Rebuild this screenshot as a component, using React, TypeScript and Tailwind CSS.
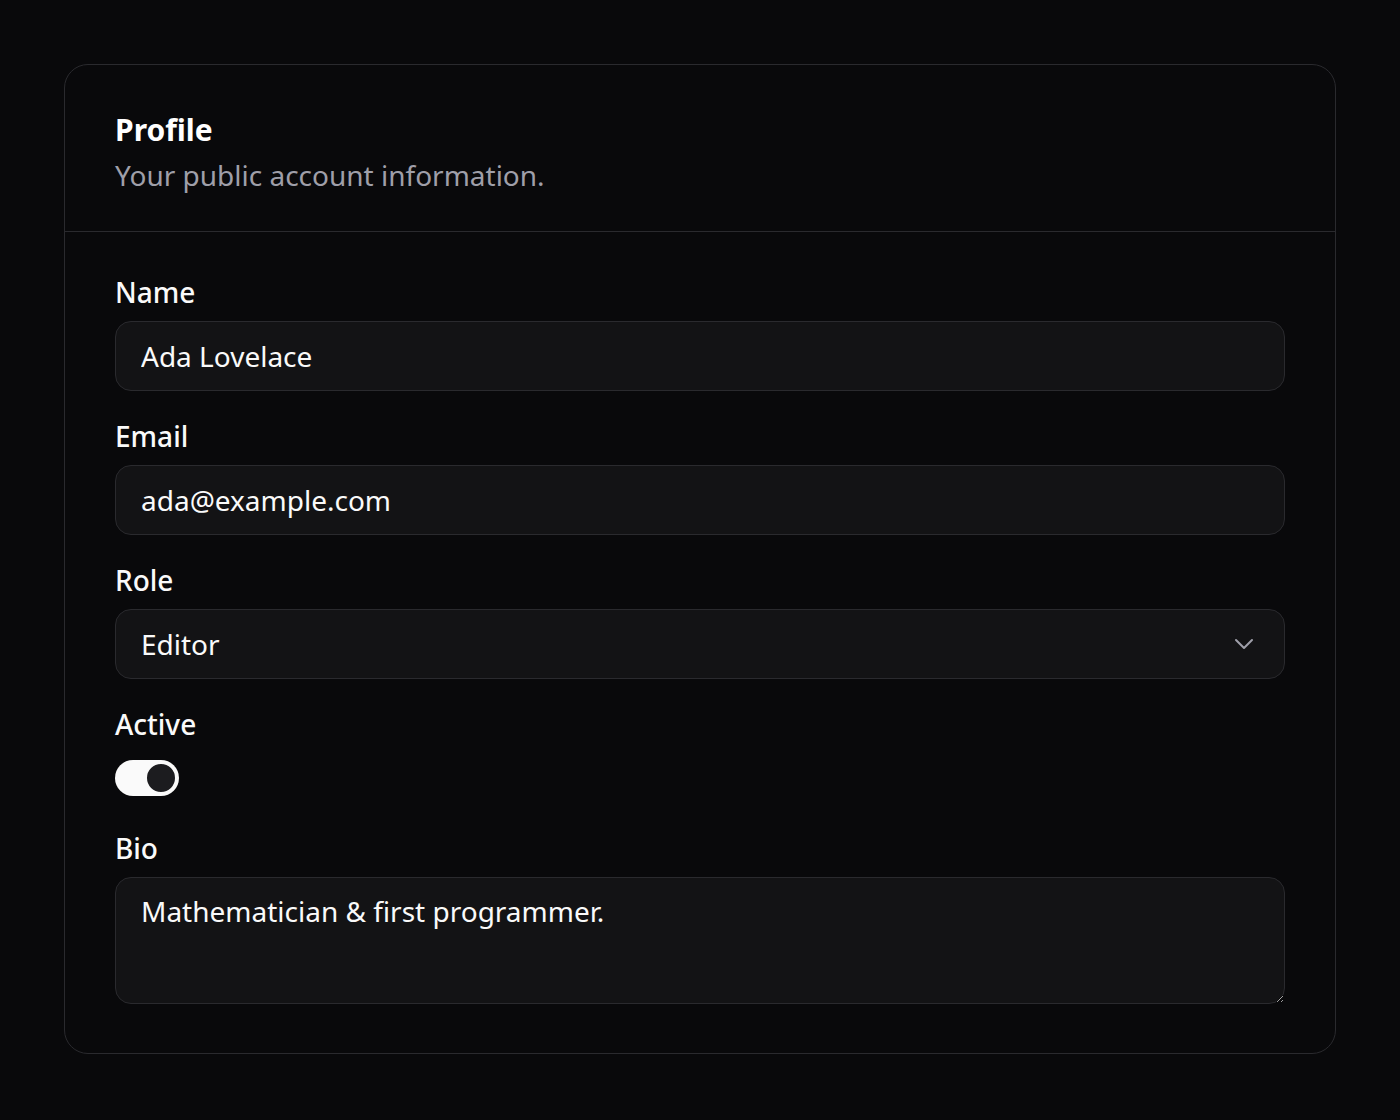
import { useState } from "react";

const font = { fontFamily: '"Noto Sans", "Open Sans", sans-serif' };

function Field({ label, children }: { label: string; children: React.ReactNode }) {
    return (
        <div className="flex flex-col gap-[11px]">
            <label className="text-[28px] leading-[36px] font-medium text-zinc-50">{label}</label>
            {children}
        </div>
    );
}

const inputClass =
    "h-[70px] w-full rounded-[16px] border border-[#2a2a2e] bg-[#131315] px-[25px] text-[28px] text-zinc-50 outline-none";

export default function App() {
    const [name, setName] = useState("Ada Lovelace");
    const [email, setEmail] = useState("ada@example.com");
    const [role, setRole] = useState("Editor");
    const [active, setActive] = useState(true);
    const [bio, setBio] = useState("Mathematician & first programmer.");

    return (
        <div className="min-h-screen bg-[#09090b] p-[64px]" style={font}>
            <div className="rounded-[24px] border border-[#2a2a2e] bg-[#09090b]">
                <div className="border-b border-[#2a2a2e] px-[50px] pt-[45px] pb-[38px]">
                    <h2 className="text-[30px] leading-[40px] font-bold text-white">Profile</h2>
                    <p className="mt-[7px] text-[28px] leading-[36px] text-zinc-400">
                        Your public account information.
                    </p>
                </div>

                <div className="flex flex-col gap-[27px] px-[50px] pt-[42px] pb-[49px]">
                    <Field label="Name">
                        <input className={inputClass} value={name} onChange={(e) => setName(e.target.value)} />
                    </Field>
                    <Field label="Email">
                        <input className={inputClass} value={email} onChange={(e) => setEmail(e.target.value)} />
                    </Field>
                    <Field label="Role">
                        <div className="relative">
                            <select
                                className={inputClass + " appearance-none"}
                                value={role}
                                onChange={(e) => setRole(e.target.value)}
                            >
                                <option>Viewer</option>
                                <option>Editor</option>
                                <option>Admin</option>
                            </select>
                            <svg
                                className="pointer-events-none absolute right-[31px] top-1/2 -translate-y-1/2 text-zinc-400"
                                width="20"
                                height="12"
                                viewBox="0 0 20 12"
                                fill="none"
                                stroke="currentColor"
                                strokeWidth="2"
                                strokeLinecap="round"
                                strokeLinejoin="round"
                            >
                                <path d="M2 2l8 8 8-8" />
                            </svg>
                        </div>
                    </Field>
                    <Field label="Active">
                        <div className="flex h-[50px] items-center">
                            <button
                                type="button"
                                onClick={() => setActive(!active)}
                                className={
                                    "flex h-[36px] w-[64px] items-center rounded-full p-[2px] " +
                                    (active ? "justify-end bg-[#fafafa]" : "justify-start bg-[#2a2a2e]")
                                }
                            >
                                <span className="block h-[32px] w-[32px] rounded-full border-2 border-[#fafafa] bg-[#1c1c1f]" />
                            </button>
                        </div>
                    </Field>
                    <Field label="Bio">
                        <textarea
                            className="h-[127px] w-full rounded-[16px] border border-[#2a2a2e] bg-[#131315] px-[25px] py-[14px] text-[28px] leading-[38px] text-zinc-50 outline-none"
                            value={bio}
                            onChange={(e) => setBio(e.target.value)}
                        />
                    </Field>
                </div>
            </div>
        </div>
    );
}
